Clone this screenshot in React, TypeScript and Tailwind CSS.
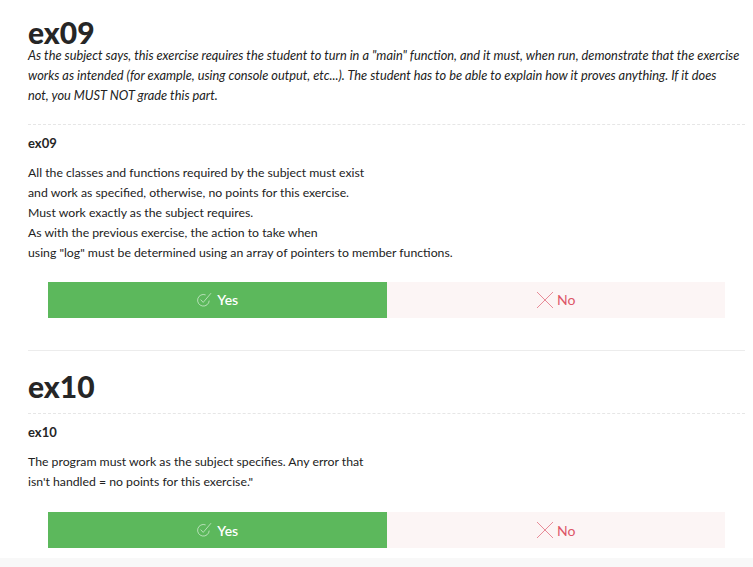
import React from 'react';

const font = { fontFamily: '"Lato", "Noto Sans", sans-serif' };

const CheckIcon = () => (
  <svg width="16" height="16" viewBox="0 0 16 16" fill="none" className="mr-[5px]">
    <path d="M13.2 8.6A5.8 5.8 0 1 1 9.6 2.9" stroke="rgba(255,255,255,0.55)" strokeWidth="1" />
    <path d="M4.6 7.6l2.6 2.8L15 1.2" stroke="rgba(255,255,255,0.55)" strokeWidth="1" />
  </svg>
);

const CrossIcon = () => (
  <svg width="18" height="18" viewBox="0 0 18 18" fill="none" className="mr-[3px]">
    <path d="M1 1l16 16M17 1L1 17" stroke="#e88b98" strokeWidth="1" />
  </svg>
);

const Grade = () => (
  <div className="flex mx-5">
    <button className="flex-1 h-9 bg-[#5cb85c] text-white text-[14px] font-semibold flex items-center justify-center">
      <CheckIcon />
      Yes
    </button>
    <button className="flex-1 h-9 bg-[#fcf5f5] text-[#dc5668] text-[14px] flex items-center justify-center">
      <CrossIcon />
      No
    </button>
  </div>
);

interface SectionProps {
  title: string;
  intro?: string[];
  lines: string[];
}

const Section: React.FC<SectionProps> = ({ title, intro, lines }) => (
  <section>
    <h2 className="text-[30px] font-black leading-[26px] text-[#262626]">{title}</h2>
    {intro && (
      <div className="italic text-[12.8px] leading-5 text-[#222]">
        {intro.map((l) => (
          <div key={l} className="whitespace-nowrap">{l}</div>
        ))}
      </div>
    )}
    <div className={`border-t border-dashed border-[#e6e6e6] ${intro ? 'mt-[19px]' : 'mt-[14px]'}`} />
    <h3 className="text-[13px] font-bold text-[#262626] mt-[9px]">{title}</h3>
    <div className={`text-[12.25px] leading-5 text-[#222] ${intro ? 'mt-[9px]' : 'mt-[10px]'}`}>
      {lines.map((l) => (
        <div key={l}>{l}</div>
      ))}
    </div>
    <div className={intro ? 'mt-[19px]' : 'mt-[20px]'}>
      <Grade />
    </div>
  </section>
);

export default function App() {
  return (
    <div className="bg-white min-h-[567px] flex flex-col" style={font}>
      <div className="pl-7 pr-2 pt-[19px]">
        <Section
          title="ex09"
          intro={[
            'As the subject says, this exercise requires the student to turn in a "main" function, and it must, when run, demonstrate that the exercise',
            'works as intended (for example, using console output, etc...). The student has to be able to explain how it proves anything. If it does',
            'not, you MUST NOT grade this part.',
          ]}
          lines={[
            'All the classes and functions required by the subject must exist',
            'and work as specified, otherwise, no points for this exercise.',
            'Must work exactly as the subject requires.',
            'As with the previous exercise, the action to take when',
            'using "log" must be determined using an array of pointers to member functions.',
          ]}
        />
        <div className="border-t border-[#ececec] mt-8 mb-[22px]" />
        <Section
          title="ex10"
          lines={[
            'The program must work as the subject specifies. Any error that',
            'isn\'t handled = no points for this exercise."',
          ]}
        />
      </div>
      <div className="flex-1 bg-[#f8f8f8] mt-[10px]" />
    </div>
  );
}
